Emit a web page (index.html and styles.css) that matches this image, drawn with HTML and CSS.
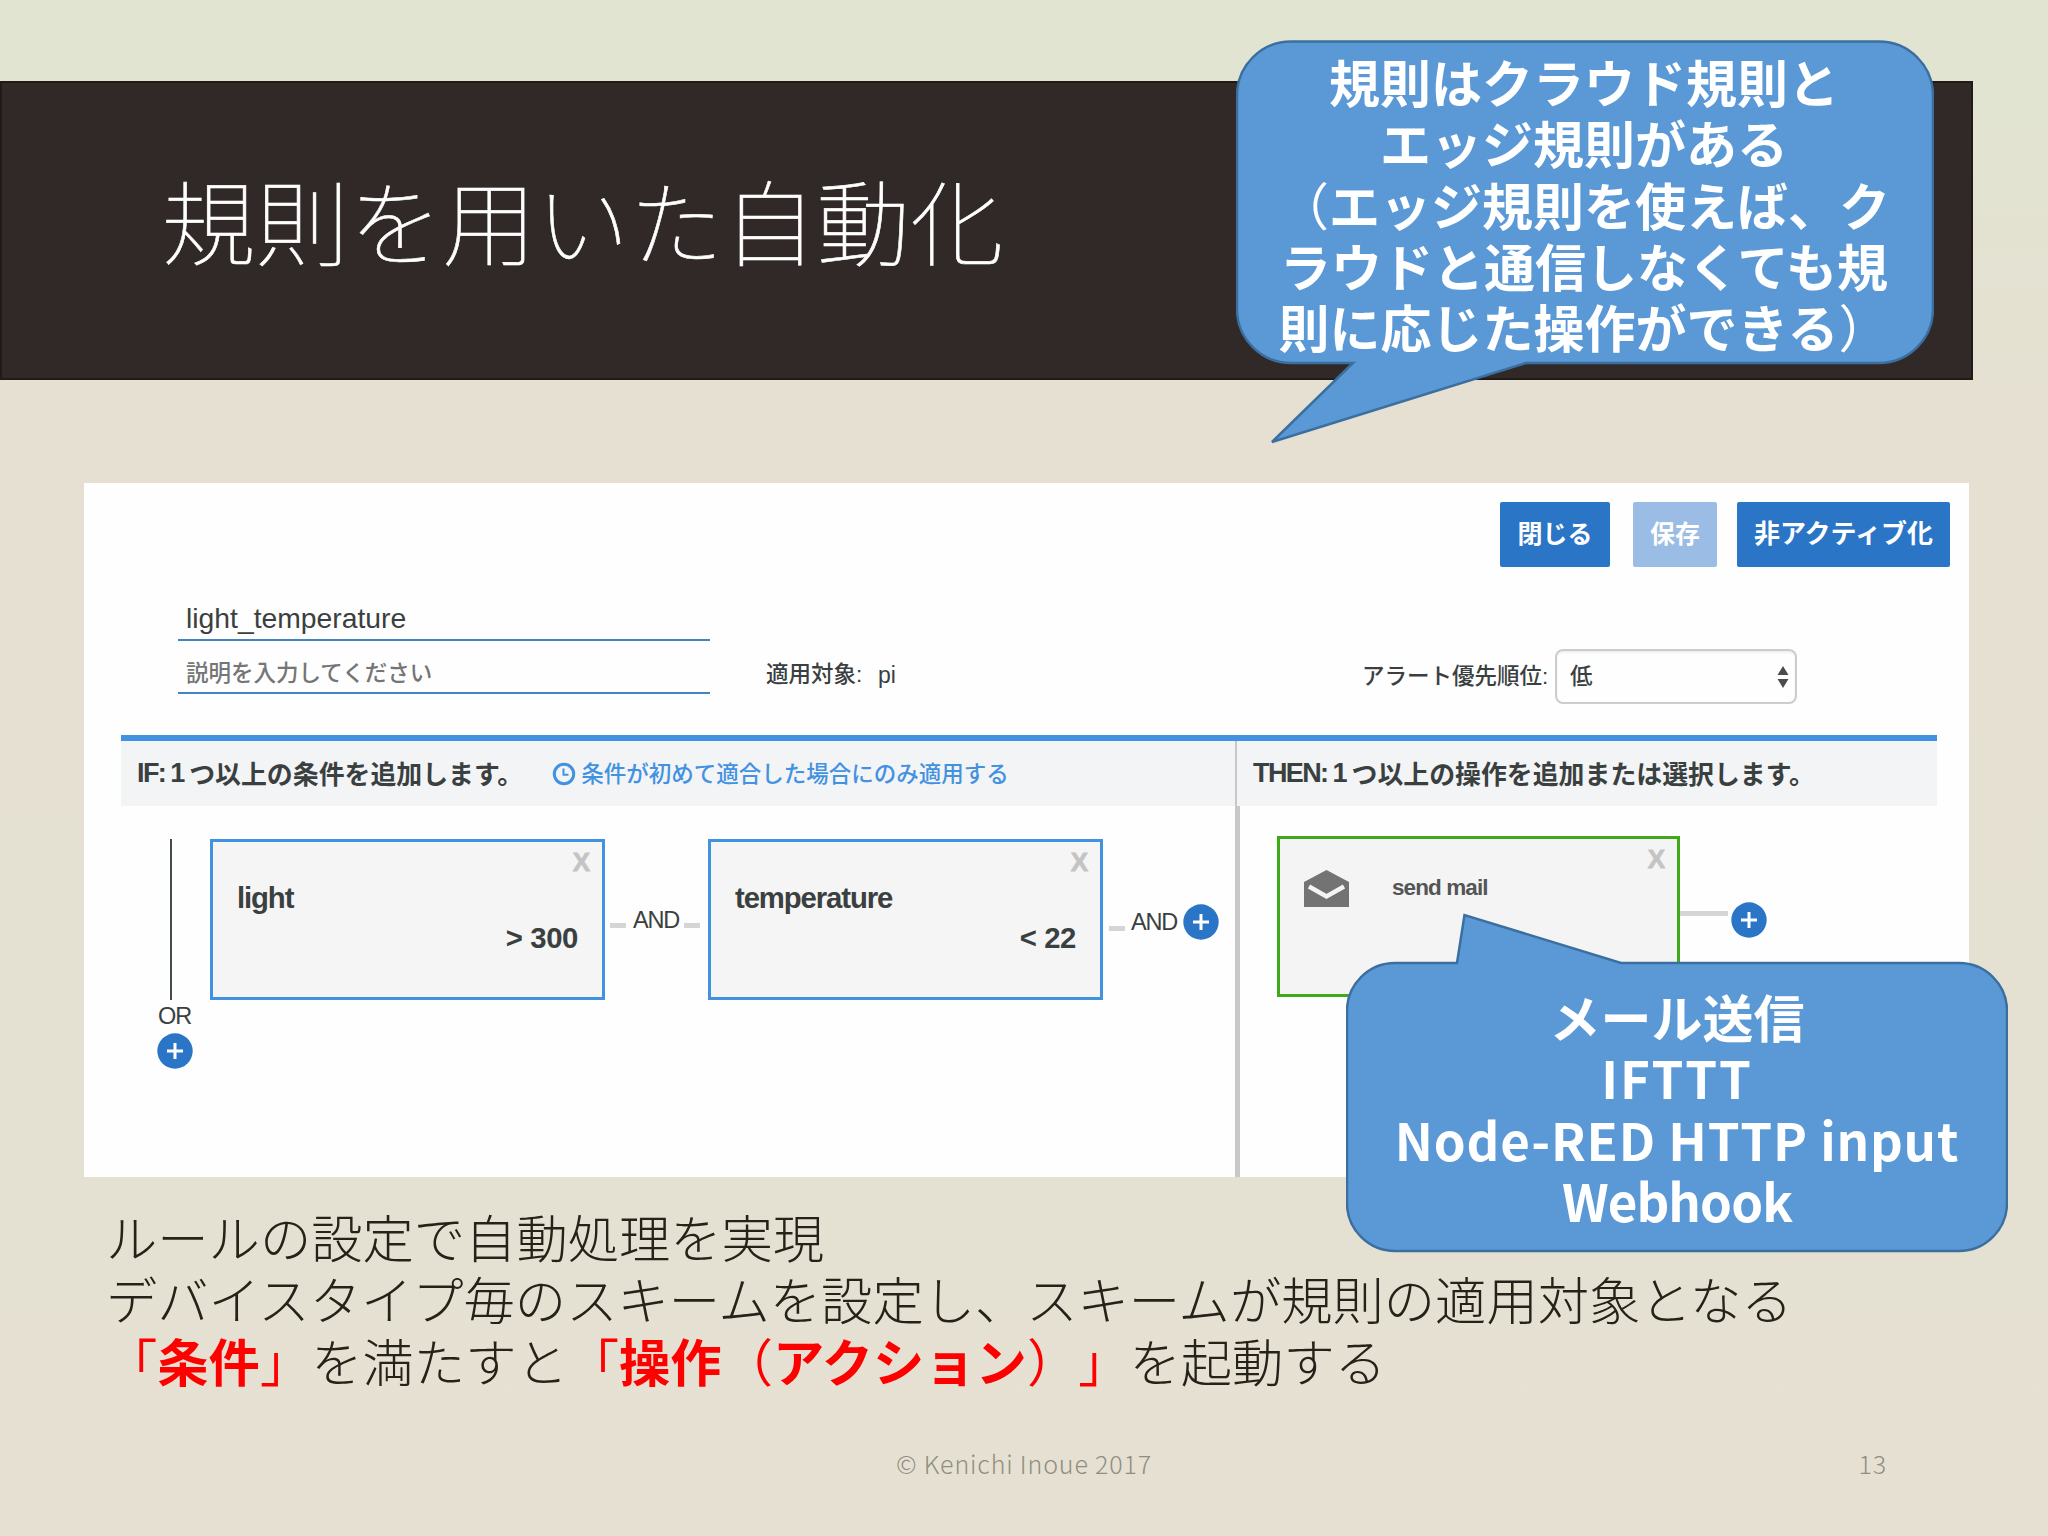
FILE: index.html
```html
<!DOCTYPE html>
<html lang="ja">
<head>
    <meta charset="UTF-8">
    <meta name="viewport" content="width=device-width, initial-scale=1.0">
    <title>規則を用いた自動化</title>
    <link rel="stylesheet" href="styles.css">
</head>
<body>
    <div class="slide">
        <header class="title-band">
            <h1>規則を用いた自動化</h1>
        </header>

        <main class="panel">
            <div class="toolbar">
                <button class="btn btn-close">閉じる</button>
                <button class="btn btn-save" disabled>保存</button>
                <button class="btn btn-deactivate">非アクティブ化</button>
            </div>

            <div class="meta">
                <div class="fields">
                    <div class="field field-name">light_temperature</div>
                    <div class="field field-desc">説明を入力してください</div>
                </div>
                <div class="target"><span class="target-label">適用対象:</span><span class="target-value">pi</span></div>
                <div class="priority">
                    <span class="priority-label">アラート優先順位:</span>
                    <div class="select">
                        <span class="select-value">低</span>
                        <svg width="12" height="22" viewBox="0 0 12 22"><path d="M6 0 L11.5 9 H0.5 Z M0.5 13 H11.5 L6 22 Z" fill="#4c4c4c"/></svg>
                    </div>
                </div>
            </div>

            <div class="rules">
                <section class="column column-if">
                    <div class="column-head">
                        <span class="latin">IF:</span><span class="latin one">1</span><span class="head-text">つ以上の条件を追加します。</span>
                        <a class="first-only">
                            <svg width="24" height="24" viewBox="0 0 24 24" fill="none" stroke="#4392e2"><circle cx="12" cy="12" r="9.7" stroke-width="3"/><path d="M11.5 6.5 V12.8 H16.5" stroke-width="2"/></svg>
                            <span class="head-text">条件が初めて適合した場合にのみ適用する</span>
                        </a>
                    </div>
                    <div class="column-body">
                        <div class="rail">
                            <div class="rail-line"></div>
                            <span class="op">OR</span>
                            <svg class="add" viewBox="0 0 36 36"><circle cx="18" cy="18" r="17.7" fill="#2a75c6"/><path d="M18 10 V26 M10 18 H26" stroke="#fff" stroke-width="3"/></svg>
                        </div>
                        <div class="card">
                            <span class="remove">X</span>
                            <div class="card-name">light</div>
                            <div class="card-value">&gt; 300</div>
                        </div>
                        <div class="link">
                            <i class="dash"></i><span class="op">AND</span><i class="dash"></i>
                        </div>
                        <div class="card">
                            <span class="remove">X</span>
                            <div class="card-name">temperature</div>
                            <div class="card-value">&lt; 22</div>
                        </div>
                        <div class="link link-last">
                            <i class="dash"></i><span class="op">AND</span>
                            <svg class="add" viewBox="0 0 36 36"><circle cx="18" cy="18" r="17.7" fill="#2a75c6"/><path d="M18 10 V26 M10 18 H26" stroke="#fff" stroke-width="3"/></svg>
                        </div>
                    </div>
                </section>

                <section class="column column-then">
                    <div class="column-head">
                        <span class="latin">THEN:</span><span class="latin one">1</span><span class="head-text">つ以上の操作を追加または選択します。</span>
                    </div>
                    <div class="column-body">
                        <div class="card card-action">
                            <span class="remove">X</span>
                            <svg class="mail" width="45" height="37" viewBox="0 0 45 37"><path d="M0 12 L22.5 0 L45 12 V37 H0 Z" fill="#737373"/><path d="M5 16.5 L22.5 26.5 L40 16.5" fill="none" stroke="#f5f4f4" stroke-width="4.5"/></svg>
                            <span class="action-name">send mail</span>
                        </div>
                        <i class="wire"></i>
                        <svg class="add" viewBox="0 0 36 36"><circle cx="18" cy="18" r="17.7" fill="#2a75c6"/><path d="M18 10 V26 M10 18 H26" stroke="#fff" stroke-width="3"/></svg>
                    </div>
                </section>
            </div>
        </main>

        <div class="notes">
            <p>ルールの設定で自動処理を実現</p>
            <p>デバイスタイプ毎のスキームを設定し、スキームが規則の適用対象となる</p>
            <p><em><span class="thin">「</span>条件<span class="thin">」</span></em>を満たすと<em><span class="thin">「</span>操作<span class="thin">（</span>アクション<span class="thin">）」</span></em>を起動する</p>
        </div>

        <footer class="footer">
            <span class="credit">© Kenichi Inoue 2017</span>
            <span class="page">13</span>
        </footer>

        <!-- 吹き出し -->
        <div class="callout callout-rules">
            <svg width="698" height="406" viewBox="0 0 698 406"><path d="M55 1.5 H643 A54 54 0 0 1 697 55.5 V269 A54 54 0 0 1 643 323 H290 L36 402 L117 323 H55 A54 54 0 0 1 1 269 V55.5 A54 54 0 0 1 55 1.5 Z"/></svg>
            <p>規則はクラウド規則と<br>エッジ規則がある<br><span class="thin">（</span>エッジ規則を使えば、ク<br>ラウドと通信しなくても規<br>則に応じた操作ができる<span class="thin">）</span></p>
        </div>

        <div class="callout callout-actions">
            <svg width="662" height="340" viewBox="0 0 662 340"><path d="M49 50 H111 L118.500 2 L275 50 H613 A48 48 0 0 1 661 98 V290 A48 48 0 0 1 613 338 H49 A48 48 0 0 1 1 290 V98 A48 48 0 0 1 49 50 Z"/></svg>
            <p>メール送信<br><span class="wider">IFTTT</span><br><span class="wide">Node-RED HTTP input</span><br><span class="narrow">Webhook</span></p>
        </div>
    </div>
</body>
</html>
```
FILE: styles.css
```css
* {
    box-sizing: border-box;
}
body {
    margin: 0;
    font-family: "Liberation Sans", "Noto Sans CJK JP", sans-serif;
    color: #3a4040;
    text-spacing-trim: space-all;
}
p, h1 {
    margin: 0;
}
.slide {
    position: relative;
    width: 2048px;
    height: 1536px;
    overflow: hidden;
    padding-top: 81px;
    background: linear-gradient(#e2e4d2 0, #e2e4d2 100px, #e5e0d1 400px, #e5e1d2 1240px, #e6e0d3 1536px);
    display: flex;
    flex-direction: column;
}

/* タイトル */
.title-band {
    width: 1973px;
    height: 299px;
    flex: none;
    background-color: #312928;
    border: 2px solid #211b18;
    display: flex;
    align-items: center;
    padding-left: 160px;
}
h1 {
    font-family: "Noto Sans CJK JP", sans-serif;
    font-weight: 100;
    font-size: 93.500px;
    line-height: 1;
    color: #fff;
    padding-bottom: 24px;
    -webkit-text-stroke: 0.600px #fff;
}

/* 規則エディター */
.panel {
    width: 1885px;
    height: 694px;
    flex: none;
    margin: 103px 0 0 84px;
    padding: 19px 19px 0 37px;
    background-color: #fefefe;
    display: flex;
    flex-direction: column;
}
.toolbar {
    display: flex;
    justify-content: flex-end;
    height: 65px;
}
.btn {
    border: none;
    border-radius: 2px;
    padding: 0 0 6px;
    font-family: "Noto Sans CJK JP", sans-serif;
    font-weight: bold;
    font-size: 25px;
    color: #fff;
    background-color: #2a75c6;
}
.btn-close {
    width: 110px;
}
.btn-save {
    width: 84px;
    margin: 0 20px 0 23px;
    background-color: #9bbce4;
}
.btn-deactivate {
    width: 213px;
    font-size: 26px;
}
.meta {
    display: flex;
    height: 168px;
    padding-left: 57px;
}
.fields {
    width: 532px;
    padding-top: 30px;
}
.field {
    border-bottom: 2px solid #4284c6;
    padding-left: 8px;
    white-space: nowrap;
}
.field-name {
    height: 44px;
    font-size: 28.300px;
    line-height: 42px;
}
.field-desc {
    height: 53px;
    font-size: 22.500px;
    line-height: 65px;
    color: #757575;
    font-weight: 500;
}
.target {
    display: flex;
    margin: 92px 0 0 56px;
    width: 540px;
    height: 32px;
    line-height: 32px;
    font-weight: 500;
}
.target-label {
    width: 112px;
    font-size: 22.500px;
}
.target-value {
    font-size: 23px;
}
.priority {
    display: flex;
    margin: 82px 0 0 56px;
    height: 55px;
    align-items: center;
    font-size: 22.500px;
    font-weight: 500;
}
.priority-label {
    width: 193px;
    padding-bottom: 5px;
    white-space: nowrap;
}
.select {
    width: 242px;
    height: 55px;
    border: 2px solid #ccc;
    border-radius: 8px;
    padding: 0 6px 0 13px;
    display: flex;
    align-items: center;
    justify-content: space-between;
    box-shadow: inset 0 2px 2px #f0f0f0;
}
.select-value {
    padding-bottom: 5px;
}
.rules {
    flex: 1;
    width: 1816px;
    display: flex;
    border-top: 6px solid #4392e2;
}
.column {
    display: flex;
    flex-direction: column;
}
.column-if {
    width: 1114px;
}
.column-then {
    width: 702px;
}
.column-head {
    height: 65px;
    padding-left: 16px;
    background-color: #f3f4f5;
    display: flex;
    align-items: center;
    font-size: 25.900px;
    font-weight: bold;
    white-space: nowrap;
}
.column-then .column-head {
    border-left: 2px solid #c8c8c8;
}
.latin {
    font-size: 27px;
    letter-spacing: -1.600px;
}
.one {
    width: 19px;
    margin-left: 5px;
}
.head-text {
    padding-bottom: 3px;
}
.first-only {
    display: flex;
    align-items: center;
    gap: 5px;
    margin-left: 29px;
    font-size: 22.500px;
    font-weight: 500;
    color: #4392e2;
}
.column-body {
    flex: 1;
    display: flex;
    align-items: flex-start;
    padding-top: 33px;
}
.column-then .column-body {
    border-left: 5px solid #c8c8c8;
    padding: 30px 0 0 37px;
}
.rail {
    width: 47px;
    margin: 0 12px 0 30px;
    display: flex;
    flex-direction: column;
    align-items: center;
}
.rail-line {
    width: 2px;
    height: 161px;
    margin-right: 8px;
    background-color: #444b4b;
}
.op {
    font-size: 23.500px;
    line-height: 32px;
    letter-spacing: -1.200px;
}
.rail .op {
    margin-bottom: 1px;
}
.add {
    width: 36px;
    height: 36px;
    flex: none;
}
.card {
    position: relative;
    width: 395px;
    height: 161px;
    border: 3px solid #4392e2;
    background-color: #f5f5f6;
    padding: 36px 24px 0 24px;
    font-size: 29.300px;
    font-weight: bold;
    line-height: 40px;
    letter-spacing: -1.100px;
}
.remove {
    position: absolute;
    top: 4px;
    right: 13px;
    font-size: 26px;
    line-height: 32px;
    color: #c4c4c4;
    -webkit-text-stroke: 0.800px #c4c4c4;
}
.card-value {
    text-align: right;
    letter-spacing: -0.400px;
}
.link {
    width: 103px;
    display: flex;
    align-items: center;
    padding: 65px 0 0 5px;
}
.link .op {
    width: 47px;
    margin: 0 4px 0 7px;
}
.dash {
    width: 16px;
    height: 5px;
    margin-top: 10px;
    background-color: #d5d5d7;
}
.link-last {
    width: 120px;
    padding: 65px 0 0 6px;
}
.link-last .dash {
    margin-top: 13px;
}
.link-last .op {
    margin: 0 5px 0 6px;
}
.card-action {
    display: flex;
    width: 403px;
    border-color: #41a818;
    background-color: #f5f4f4;
    padding: 31px 0 0 24px;
    font-size: 22.500px;
    line-height: 36px;
    color: #555;
}
.action-name {
    margin-left: 43px;
    letter-spacing: -0.900px;
}
.wire {
    width: 48px;
    height: 5px;
    margin: 75px 3px 0 0;
    background-color: #d5d5d7;
}
.column-then .add {
    margin-top: 66px;
}

/* 説明文 */
.notes {
    padding: 28px 0 0 106px;
    font-family: "Noto Sans CJK JP", sans-serif;
    font-weight: 300;
    font-size: 51.300px;
    line-height: 62px;
    color: #26221a;
    white-space: nowrap;
}
.notes em {
    font-style: normal;
    font-weight: bold;
    color: #fe0000;
}
.thin {
    font-weight: 400;
}
.footer {
    position: absolute;
    left: 0;
    right: 0;
    bottom: 53px;
    display: flex;
    justify-content: space-between;
    padding: 0 161px 0 896px;
    font-family: "Noto Sans CJK JP", sans-serif;
    font-weight: 300;
    font-size: 25px;
    line-height: 40px;
    letter-spacing: 0.850px;
    color: #8f8e80;
}

/* 吹き出し */
.callout {
    position: absolute;
    font-family: "Noto Sans CJK JP", sans-serif;
    font-weight: bold;
    font-size: 51px;
    line-height: 61.300px;
    color: #fff;
    text-align: center;
    white-space: nowrap;
}
.callout svg {
    position: absolute;
    top: 0;
    left: 0;
    fill: #5b99d6;
    stroke: #3b6f9f;
    stroke-width: 2.500px;
}
.callout p {
    position: relative;
}
.callout-rules {
    left: 1236px;
    top: 40px;
    width: 696px;
    padding-top: 11px;
}
.callout-actions {
    left: 1346px;
    top: 913px;
    width: 662px;
    padding-top: 73px;
}
.wide {
    letter-spacing: 0.800px;
}
.wider {
    letter-spacing: 1.800px;
}
.narrow {
    letter-spacing: -0.900px;
}
```
